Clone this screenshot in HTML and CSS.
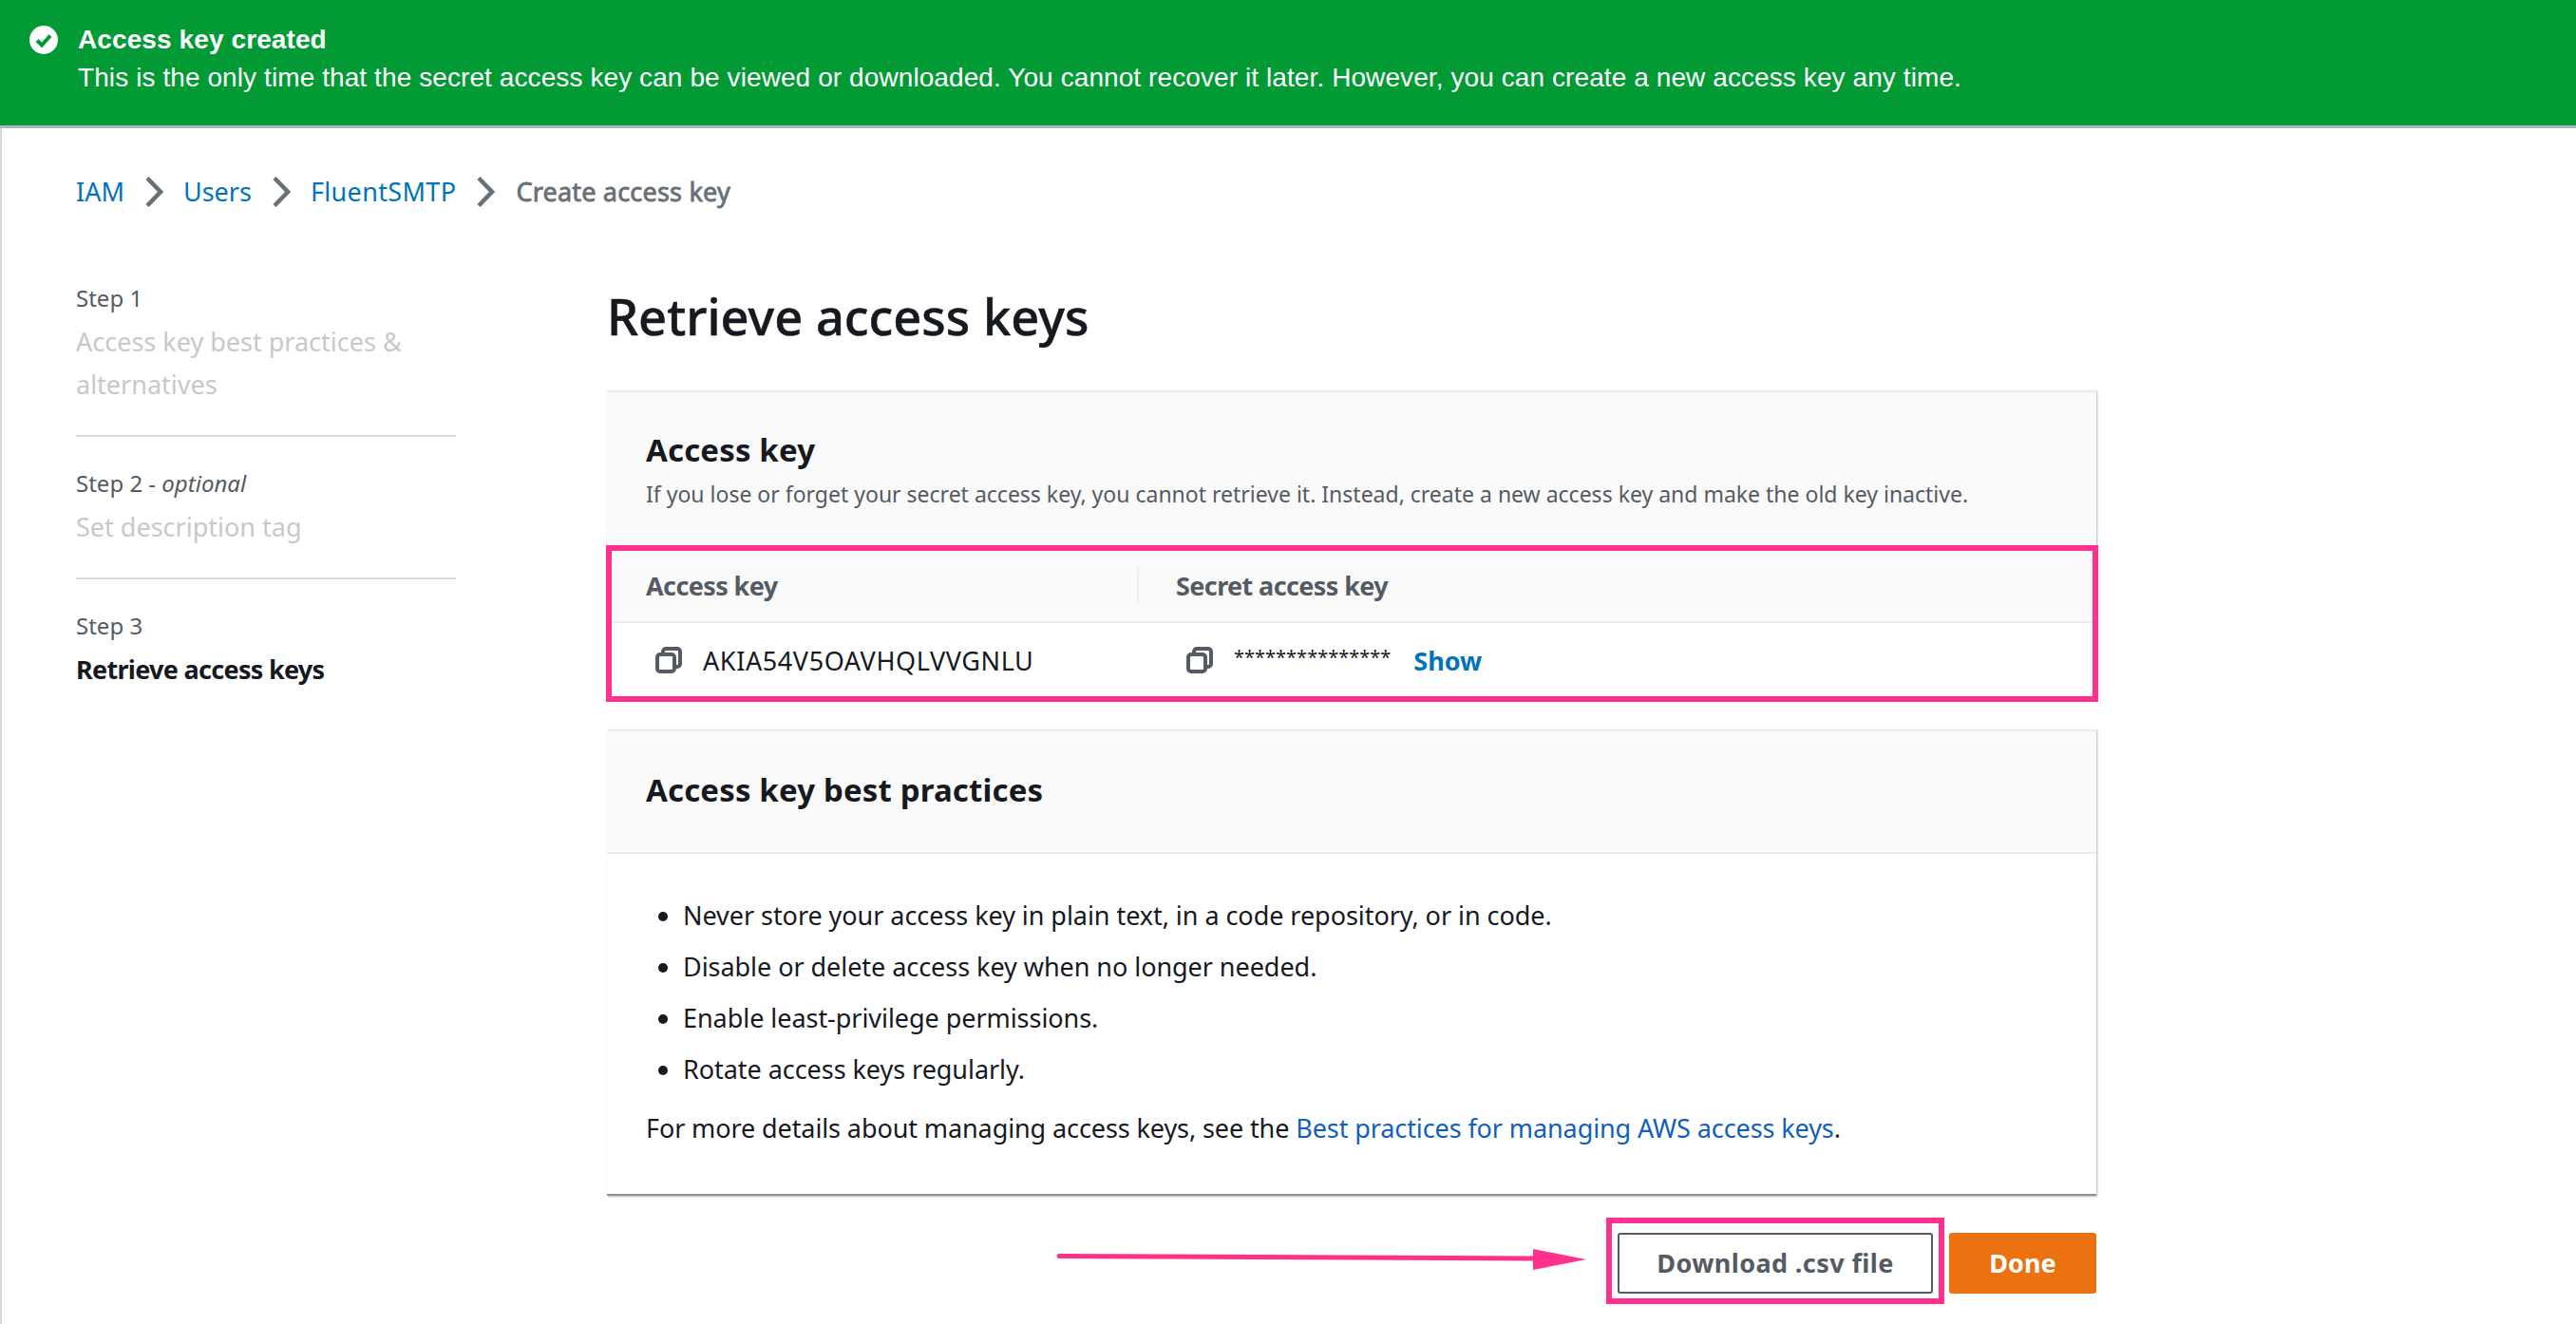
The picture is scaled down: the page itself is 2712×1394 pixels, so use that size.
FILE: index.html
```html
<!DOCTYPE html>
<html lang="en">
<head>
<meta charset="utf-8">
<title>Retrieve access keys</title>
<link rel="stylesheet" href="styles.css">
</head>
<body>
<div class="flash">
  <svg class="flash-icon" width="30" height="30" viewBox="0 0 30 30"><circle cx="15" cy="15" r="15" fill="#fff"/><path d="M8 15.5l5 5 9-10" fill="none" stroke="#029a35" stroke-width="4"/></svg>
  <div class="flash-text">
    <div class="flash-title">Access key created</div>
    <div class="flash-body">This is the only time that the secret access key can be viewed or downloaded. You cannot recover it later. However, you can create a new access key any time.</div>
  </div>
</div>
<main class="main">
  <nav class="crumbs">
    <a class="link">IAM</a>
    <svg class="chev" width="20" height="32" viewBox="0 0 20 32"><path d="M3 1.5L17 16 3 30.5" fill="none" stroke="#687078" stroke-width="4.5"/></svg>
    <a class="link">Users</a>
    <svg class="chev" width="20" height="32" viewBox="0 0 20 32"><path d="M3 1.5L17 16 3 30.5" fill="none" stroke="#687078" stroke-width="4.5"/></svg>
    <a class="link fluent">FluentSMTP</a>
    <svg class="chev" width="20" height="32" viewBox="0 0 20 32"><path d="M3 1.5L17 16 3 30.5" fill="none" stroke="#687078" stroke-width="4.5"/></svg>
    <span class="crumb-current">Create access key</span>
  </nav>
  <div class="layout">
    <aside class="steps">
      <div class="step">
        <div class="step-label">Step 1</div>
        <div class="step-title">Access key best practices &amp; alternatives</div>
      </div>
      <div class="step">
        <div class="step-label">Step 2 - <em>optional</em></div>
        <div class="step-title">Set description tag</div>
      </div>
      <div class="step">
        <div class="step-label">Step 3</div>
        <div class="step-title active">Retrieve access keys</div>
      </div>
    </aside>
    <section class="content">
      <h1 class="page-title">Retrieve access keys</h1>
      <div class="card">
        <div class="card-head first">
          <h2 class="card-title">Access key</h2>
          <p class="card-sub">If you lose or forget your secret access key, you cannot retrieve it. Instead, create a new access key and make the old key inactive.</p>
        </div>
        <div class="table">
          <div class="row head">
            <div class="cell c1">Access key</div>
            <div class="cell c2">Secret access key</div>
          </div>
          <div class="row body">
            <div class="cell c1">
              <svg class="copy" width="28" height="28" viewBox="0 0 28 28"><path d="M8 6V5a3 3 0 0 1 3-3h12a3 3 0 0 1 3 3v13a3 3 0 0 1-3 3h-1" fill="none" stroke="#545b64" stroke-width="4"/><rect x="2" y="8" width="18" height="18" rx="3" fill="#fff" stroke="#545b64" stroke-width="4"/></svg>
              <span class="key">AKIA54V5OAVHQLVVGNLU</span>
            </div>
            <div class="cell c2">
              <svg class="copy" width="28" height="28" viewBox="0 0 28 28"><path d="M8 6V5a3 3 0 0 1 3-3h12a3 3 0 0 1 3 3v13a3 3 0 0 1-3 3h-1" fill="none" stroke="#545b64" stroke-width="4"/><rect x="2" y="8" width="18" height="18" rx="3" fill="#fff" stroke="#545b64" stroke-width="4"/></svg>
              <span class="stars">***************</span>
              <a class="link show">Show</a>
            </div>
          </div>
          <div class="mark mark-table"></div>
        </div>
      </div>
      <div class="card second">
        <div class="card-head">
          <h2 class="card-title">Access key best practices</h2>
        </div>
        <div class="card-body">
          <ul class="tips">
            <li>Never store your access key in plain text, in a code repository, or in code.</li>
            <li>Disable or delete access key when no longer needed.</li>
            <li>Enable least-privilege permissions.</li>
            <li>Rotate access keys regularly.</li>
          </ul>
          <p class="more">For more details about managing access keys, see the <a class="link doc">Best practices for managing AWS access keys</a>.</p>
        </div>
      </div>
      <div class="actions">
        <svg class="arrow" width="560" height="24" viewBox="0 0 560 24"><path d="M3 8.5L505 11" stroke="#ff318c" stroke-width="5" stroke-linecap="round"/><path d="M502 1l56 11-56 11z" fill="#ff318c"/></svg>
        <div class="download-wrap">
          <button class="btn btn-normal">Download .csv file</button>
          <div class="mark mark-btn"></div>
        </div>
        <button class="btn btn-primary">Done</button>
      </div>
    </section>
  </div>
</main>
</body>
</html>
```
FILE: styles.css
```css
* { box-sizing: border-box; }
html, body { margin: 0; padding: 0; height: 100%; overflow: hidden; background: #fff; }
body { font-family: "Noto Sans", "Liberation Sans", sans-serif; color: #16191f; }

.flash {
  height: 135px;
  background: #029a35;
  border-bottom: 3px solid #aab7b8;
  color: #fff;
  display: flex;
  align-items: flex-start;
  padding: 27px 0 0 31px;
  gap: 21px;
  font-family: "Liberation Sans", Arial, sans-serif;
}
.flash-icon { flex: none; }
.flash-title { font-size: 28px; font-weight: 700; line-height: 30px; letter-spacing: .1px; }
.flash-body { font-size: 28px; line-height: 40px; margin-top: 5px; letter-spacing: .09px; }

.main { border-left: 2px solid #d5dbdb; padding: 48px 0 0 78px; height: 1259px; }
.link { color: #0073bb; text-decoration: none; }
.crumbs { display: flex; align-items: center; height: 38px; font-size: 27px; line-height: 38px; gap: 21px; }
.chev { flex: none; }
.fluent { letter-spacing: .35px; }
.crumb-current { color: #687078; -webkit-text-stroke: .8px #687078; letter-spacing: .2px; margin-left: 1px; }

.layout { display: grid; grid-template-columns: 400px 1568px; column-gap: 159px; }

.steps { padding-top: 73px; }
.step { padding: 29px 0 31px; border-bottom: 2px solid #d5dbdb; }
.step:first-child { padding-top: 0; }
.step:last-child { border-bottom: 0; }
.step-label { font-size: 24px; line-height: 40px; color: #545b64; margin-bottom: 3px; }
.step-title { font-size: 27px; line-height: 45px; color: #c6c9cc; }
.step-title.active { color: #16191f; font-weight: 700; letter-spacing: -.7px; }

.content { padding-top: 78px; }
.page-title { margin: 0 0 44px; font-size: 52.4px; line-height: 68px; font-weight: 500; -webkit-text-stroke: .5px #16191f; }

.card { background: #fff; border-top: 2px solid #eaeded; box-shadow: 1px 1px 2px rgba(0,28,36,.3); }
.card.second { margin-top: 34px; border-bottom: 2px solid #879596; }
.card-head { background: #fafafa; padding: 40px 41px 0; height: 129px; border-bottom: 2px solid #eaeded; }
.card-head.first { height: auto; padding-top: 39px; padding-bottom: 42px; border-bottom: 0; }
.card-title { margin: 0; font-size: 33px; line-height: 44px; font-weight: 700; letter-spacing: .15px; }
.card-sub { margin: 6px 0 0; font-size: 23px; line-height: 36px; color: #545b64; }

.table { position: relative; }
.row { display: flex; }
.row.head { height: 76px; background: #fafafa; border-bottom: 2px solid #eaeded; font-size: 27px; font-weight: 700; color: #545b64; padding-top: 17px; letter-spacing: -.6px; }
.row.body { height: 78px; font-size: 27px; align-items: center; }
.cell { display: flex; align-items: center; }
.c1 { width: 558px; padding-left: 41px; }
.c2 { flex: 1; padding-left: 39px; }
.row.head .cell { height: 38px; }
.row.head .c2 { border-left: 2px solid #eaeded; }
.row.body .c1 { padding-left: 51px; }
.row.body .c2 { padding-left: 52px; }
.copy { flex: none; margin-right: 22px; }
.key { letter-spacing: .6px; }
.stars { font-size: 20px; margin-right: 24px; position: relative; top: -4px; }
.show { font-weight: 700; }

.mark { position: absolute; border: 6px solid #ff318c; pointer-events: none; }
.mark-table { top: -6px; left: -1px; right: -2px; bottom: -5px; }

.tips { margin: 0; padding: 38px 0 0 80px; }
.tips li { font-size: 27px; line-height: 54px; letter-spacing: -.05px; }
.more { margin: 8px 0 0; padding: 0 41px 42px; font-size: 27px; line-height: 54px; letter-spacing: -.1px; }
.doc { color: #0f5fbe; }

.actions { position: relative; display: flex; justify-content: flex-end; align-items: center; gap: 17px; margin-top: 39px; }
.arrow { position: absolute; left: 473px; top: 16px; }
.download-wrap { position: relative; }
.btn { height: 64px; font-family: inherit; font-size: 27px; font-weight: 700; border-radius: 3px; padding: 0 0 2px; display: block; }
.btn-normal { width: 332px; background: #fff; border: 2px solid #545b64; color: #545b64; letter-spacing: .4px; }
.btn-primary { width: 155px; background: #ec7211; border: 0; color: #fff; }
.mark-btn { top: -16px; left: -12px; right: -12px; bottom: -11px; }
```
